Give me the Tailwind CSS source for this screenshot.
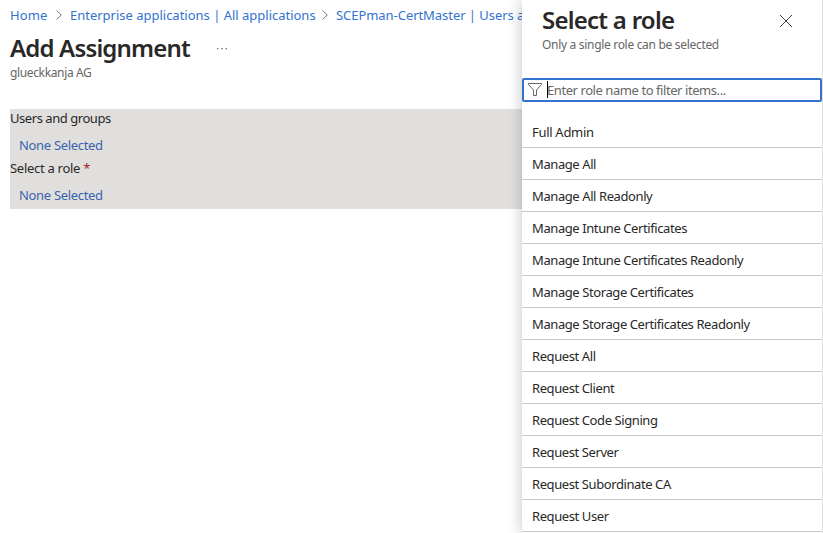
<!DOCTYPE html>
<html lang="en">
<head>
<meta charset="utf-8">
<title>Add Assignment</title>
<script src="https://cdn.jsdelivr.net/npm/@tailwindcss/browser@4"></script>
</head>
<body class="w-[823px] h-[533px] overflow-hidden bg-white font-['Noto_Sans','Open_Sans',sans-serif] text-[13px] leading-[18px] text-[#292827] whitespace-nowrap">
<div class="flex h-[533px]">
  <main class="w-[522px] shrink-0 pl-[10px]">
    <nav class="flex h-[30px] items-center text-[#3173cf]">
      <a class="w-[39px] shrink-0 tracking-[0.15px]">Home</a>
      <svg class="ml-[6px] mr-[5px] size-[10px] shrink-0" viewBox="0 0 10 10" fill="none" stroke="#777" stroke-width="1"><path d="M1.5 .5L6.3 5 1.5 9.5"/></svg>
      <a class="w-[244px] shrink-0 tracking-[-0.01px]">Enterprise applications | All applications</a>
      <svg class="ml-[7px] mr-[5px] size-[10px] shrink-0" viewBox="0 0 10 10" fill="none" stroke="#777" stroke-width="1"><path d="M1.5 .5L6.3 5 1.5 9.5"/></svg>
      <a class="shrink-0 tracking-[-0.05px]">SCEPman-CertMaster | Users a</a>
    </nav>
    <div class="flex h-[35px] items-center">
      <h1 class="w-[206px] text-[24px] leading-[32px] font-semibold tracking-[-0.83px]">Add Assignment</h1>
      <svg class="mt-[2px] h-[3px] w-[12px]" viewBox="0 0 12 3" fill="#666"><rect x="1" y="1" width="1.3" height="1.3"/><rect x="5.3" y="1" width="1.3" height="1.3"/><rect x="9.6" y="1" width="1.3" height="1.3"/></svg>
    </div>
    <p class="h-[44px] text-[12px] leading-[16px] text-[#666] tracking-[-0.36px]">glueckkanja AG</p>
    <section class="h-[100px] bg-[#e1dfdd]">
      <div class="h-[27px] leading-[18px] tracking-[-0.45px]">Users and groups</div>
      <div class="h-[23px] pl-[9px] leading-[18px] text-[#3864ae] tracking-[-0.32px]">None Selected</div>
      <div class="h-[27px] leading-[18px] tracking-[-0.28px]">Select a role <span class="text-[#a4262c]">*</span></div>
      <div class="h-[23px] pl-[9px] leading-[18px] text-[#3864ae] tracking-[-0.32px]">None Selected</div>
    </section>
  </main>
  <aside class="relative h-[533px] w-[301px] shrink-0 border-r border-[#e1dfdd] bg-white shadow-[0_0_14px_rgba(0,0,0,0.24)]">
    <header class="flex h-[78px] justify-between pl-5 pr-[29px]">
      <div class="pt-[4px]">
        <h2 class="h-[33px] text-[24px] leading-[32px] font-semibold tracking-[-0.75px]">Select a role</h2>
        <p class="text-[12px] leading-[16px] text-[#666] tracking-[-0.31px]">Only a single role can be selected</p>
      </div>
      <svg class="mt-[14px] size-[14px]" viewBox="0 0 14 14" fill="none" stroke="#444" stroke-width="1"><path d="M1 1L13 13M13 1L1 13"/></svg>
    </header>
    <div class="flex h-6 items-center rounded-[2px] border-2 border-[#3173cf] pl-[3px]">
      <svg class="size-[16px] shrink-0" viewBox="0 0 16 16" fill="none" stroke="#666" stroke-width="1"><path d="M1.2 1.5H14.8V2.2L9.5 8V13.5H6.5V8L1.2 2.2Z"/></svg>
      <span class="ml-[4px] -mr-px h-[17px] w-px bg-black -translate-y-px"></span>
      <span class="text-[#666] tracking-[-0.43px]">Enter role name to filter items...</span>
    </div>
    <ul class="pt-[14px] tracking-[-0.41px] [&>li]:h-8 [&>li]:border-b [&>li]:border-[#c8c8c8] [&>li]:pl-[10px] [&>li]:leading-[32px]">
      <li class="tracking-[-0.3px]">Full Admin</li>
      <li>Manage All</li>
      <li>Manage All Readonly</li>
      <li>Manage Intune Certificates</li>
      <li>Manage Intune Certificates Readonly</li>
      <li>Manage Storage Certificates</li>
      <li>Manage Storage Certificates Readonly</li>
      <li>Request All</li>
      <li>Request Client</li>
      <li>Request Code Signing</li>
      <li>Request Server</li>
      <li>Request Subordinate CA</li>
      <li>Request User</li>
    </ul>
  </aside>
</div>
</body>
</html>
